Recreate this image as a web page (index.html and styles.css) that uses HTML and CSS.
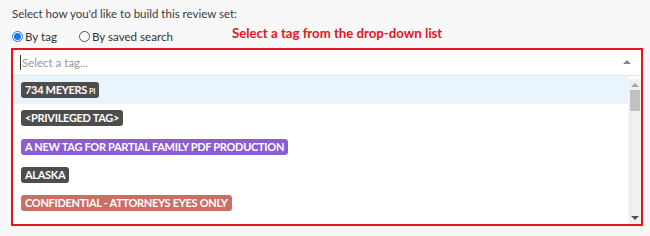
FILE: index.html
```html
<!DOCTYPE html>
<html>
<head>
<meta charset="utf-8">
<link rel="stylesheet" href="styles.css">
</head>
<body>
<div class="page">
  <div class="intro">Select how you'd like to build this review set:</div>
  <div class="choice-row">
    <label class="radio"><span class="dot on"></span>By tag</label>
    <label class="radio second"><span class="dot"></span>By saved search</label>
    <span class="note">Select a tag from the drop-down list</span>
  </div>
  <div class="box">
    <div class="search">
      <span class="caret"></span><span class="placeholder">Select a tag...</span>
      <span class="up-arrow"></span>
    </div>
    <div class="results">
      <ul class="list">
        <li class="item active"><span class="tag dark">734 MEYERS<small>PI</small></span></li>
        <li class="item"><span class="tag dark">&lt;PRIVILEGED TAG&gt;</span></li>
        <li class="item"><span class="tag purple">A NEW TAG FOR PARTIAL FAMILY PDF PRODUCTION</span></li>
        <li class="item"><span class="tag dark">ALASKA</span></li>
        <li class="item"><span class="tag salmon">CONFIDENTIAL - ATTORNEYS EYES ONLY</span></li>
      </ul>
      <div class="scrollbar">
        <span class="sb-up"></span>
        <span class="sb-thumb"></span>
        <span class="sb-fill"></span>
        <span class="sb-down"></span>
      </div>
    </div>
  </div>
</div>
</body>
</html>
```

FILE: styles.css
```css
* { box-sizing: border-box; }
html, body { margin: 0; padding: 0; }
body {
  background: #f8f8f8;
  font-family: Lato, "Open Sans", sans-serif;
  color: #333;
  font-size: 11.5px;
  width: 650px;
  height: 236px;
  overflow: hidden;
}
.page { padding: 6px 0 0 12px; }
.intro { line-height: 16px; height: 16px; color: #3a3a3a; }
.choice-row {
  display: flex;
  align-items: center;
  height: 24px;
  margin-top: 2px;
}
.radio { display: flex; align-items: center; color: #333; font-size: 11.6px; }
.radio.second { margin-left: 22px; }
.dot {
  width: 11px; height: 11px;
  border: 1px solid #555;
  border-radius: 50%;
  margin-right: 2px;
  background: #fff;
  position: relative;
}
.dot.on { border-color: #1a73e8; }
.dot.on::after {
  content: "";
  position: absolute;
  left: 1px; top: 1px;
  width: 7px; height: 7px;
  border-radius: 50%;
  background: #1a73e8;
}
.note {
  margin-left: 59px;
  margin-top: -6px;
  color: #e8141c;
  font-weight: bold;
  font-size: 13.2px;
}
.box {
  margin-left: -1px;
  width: 632px;
  height: 178px;
  border: 2px solid #e8141c;
  background: #fff;
  display: flex;
  flex-direction: column;
}
.search {
  height: 26px;
  border-bottom: 1px solid #e6e6e6;
  display: flex;
  align-items: center;
  padding-left: 7px;
  position: relative;
}
.caret { width: 1px; height: 15px; background: #333; margin-right: 1px; }
.placeholder { color: #999; font-size: 11.5px; }
.up-arrow {
  position: absolute;
  right: 10px;
  top: 10px;
  width: 0; height: 0;
  border-left: 4px solid transparent;
  border-right: 4px solid transparent;
  border-bottom: 4px solid #888;
}
.results { flex: 1; display: flex; overflow: hidden; }
.list { list-style: none; margin: 0; padding: 0; flex: 1; }
.item {
  height: 28.3px;
  display: flex;
  align-items: center;
  padding-left: 8px;
}
.item.active { background: #eaf4fd; }
.tag {
  display: inline-block;
  color: #fff;
  font-weight: bold;
  font-size: 11px;
  line-height: 16px;
  height: 16px;
  padding: 0 4px;
  border-radius: 3px;
  letter-spacing: -0.3px;
}
.tag small { font-size: 7px; margin-left: 2px; }
.tag.dark { background: #4d4d4d; }
.tag.purple { background: #8a5dd0; }
.tag.salmon { background: #cb6f65; }
.scrollbar {
  width: 13px;
  background: #f0f0f0;
  display: flex;
  flex-direction: column;
  align-items: center;
  margin-top: 3px;
  border-left: 1px solid #f6f6f6;
}
.sb-up {
  margin-top: 4px;
  width: 0; height: 0;
  border-left: 4px solid transparent;
  border-right: 4px solid transparent;
  border-bottom: 4px solid #a3a3a3;
}
.sb-thumb {
  margin-top: 3px;
  width: 10px;
  height: 21px;
  background: #c1c1c1;
}
.sb-fill { flex: 1; }
.sb-down {
  margin-bottom: 4px;
  width: 0; height: 0;
  border-left: 4px solid transparent;
  border-right: 4px solid transparent;
  border-top: 4px solid #505050;
}
```
